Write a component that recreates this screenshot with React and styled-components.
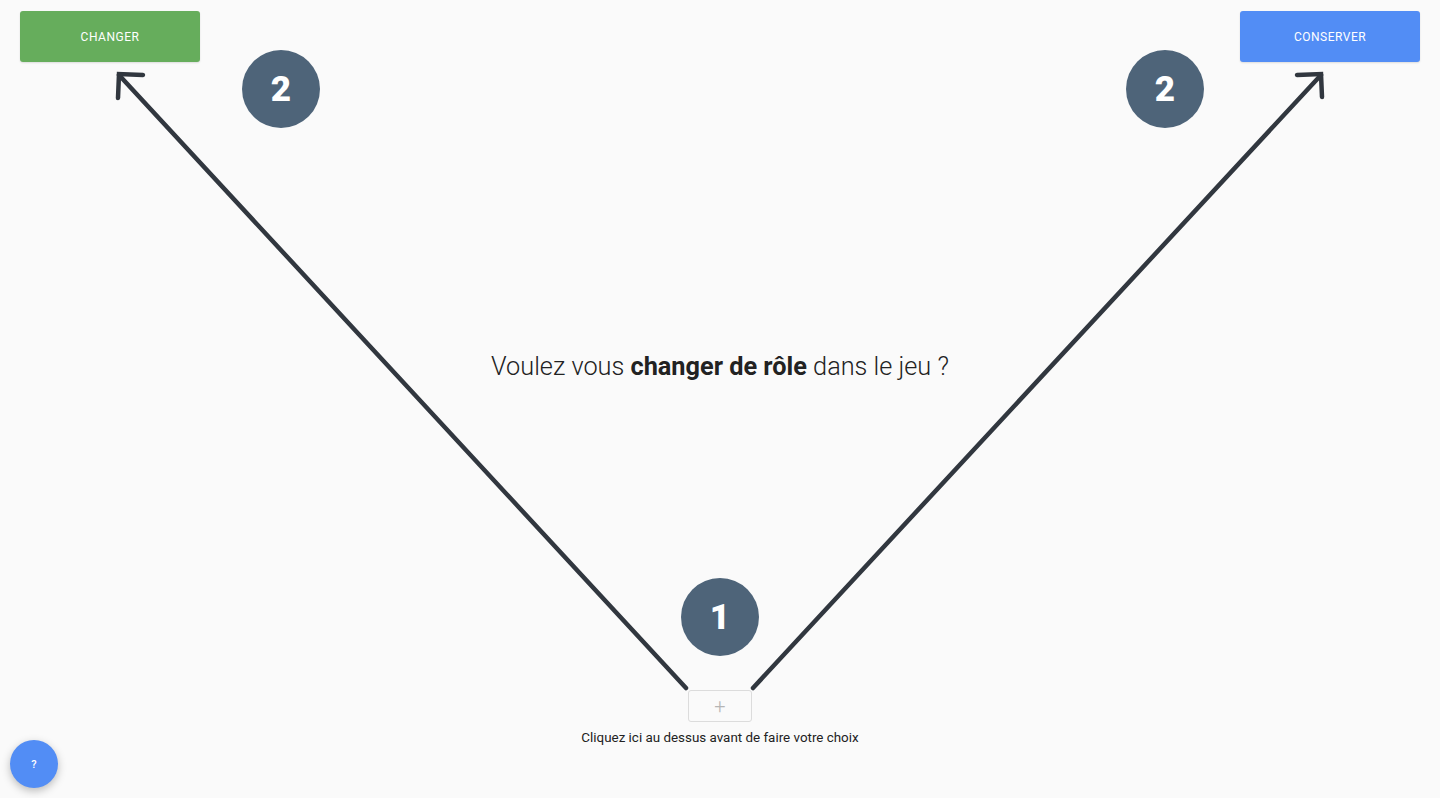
import React from "react";
import styled, { createGlobalStyle } from "styled-components";

const GlobalStyle = createGlobalStyle`
	html, body {
		margin: 0;
		padding: 0;
		background: #fafafa;
		font-family: Roboto, "Liberation Sans", Arial, sans-serif;
	}
`;

const App = () => {
	return (
		<Page>
			<GlobalStyle />
			<TopBar>
				<ChoiceButton color="#66ad5c">Changer</ChoiceButton>
				<ChoiceButton color="#528df5">Conserver</ChoiceButton>
			</TopBar>

			<Question>
				Voulez vous <b>changer de rôle</b> dans le jeu ?
			</Question>

			<Bottom>
				<PlusBox>+</PlusBox>
				<Caption>Cliquez ici au dessus avant de faire votre choix</Caption>
			</Bottom>

			<Arrows width="1440" height="798" viewBox="0 0 1440 798">
				<g stroke="#31373f" strokeWidth="4.5" strokeLinecap="round" fill="none">
					<line x1="686" y1="688" x2="119" y2="75" />
					<polyline points="143,75 119,74 118,98" />
					<line x1="753" y1="688" x2="1321" y2="75" />
					<polyline points="1297,75 1321,74 1322,97" />
				</g>
			</Arrows>

			<Step left={242} top={50}>2</Step>
			<Step left={1126} top={50}>2</Step>
			<Step left={681} top={578}>1</Step>

			<HelpButton>?</HelpButton>
		</Page>
	);
};

const Page = styled.div`
	position: relative;
	height: 100vh;
	display: flex;
	flex-direction: column;
	overflow: hidden;
`;

const TopBar = styled.div`
	display: flex;
	justify-content: space-between;
	padding: 11px 20px 0;
`;

const ChoiceButton = styled.button`
	width: 180px;
	height: 51px;
	border: none;
	border-radius: 3px;
	background: ${(p) => p.color};
	color: #fff;
	font-family: Roboto, "Liberation Sans", Arial, sans-serif;
	font-size: 12px;
	font-weight: 400;
	letter-spacing: 0.5px;
	text-transform: uppercase;
	padding-top: 2px;
	box-shadow: 0 1px 2px rgba(0, 0, 0, 0.12);
	cursor: pointer;
`;

const Question = styled.div`
	margin-top: 289px;
	text-align: center;
	font-size: 25.3px;
	font-weight: 300;
	line-height: 32px;
	color: #222;

	b {
		font-weight: 700;
	}
`;

const Bottom = styled.div`
	margin-top: 307px;
	display: flex;
	flex-direction: column;
	align-items: center;
	gap: 8px;
`;

const PlusBox = styled.div`
	width: 62px;
	height: 30px;
	border: 1px solid #dcdcdc;
	border-radius: 3px;
	display: flex;
	align-items: center;
	justify-content: center;
	color: #b5b5b5;
	font-size: 20px;
	font-weight: 300;
`;

const Caption = styled.div`
	font-size: 13.4px;
	color: #222;
	line-height: 16px;
`;

const Arrows = styled.svg`
	position: absolute;
	left: 0;
	top: 0;
	pointer-events: none;
`;

const Step = styled.div`
	position: absolute;
	left: ${(p) => p.left}px;
	top: ${(p) => p.top}px;
	width: 78px;
	height: 78px;
	border-radius: 50%;
	background: #4e6479;
	color: #fff;
	display: flex;
	align-items: center;
	justify-content: center;
	font-size: 35px;
	font-weight: 900;
`;

const HelpButton = styled.button`
	position: absolute;
	left: 10px;
	bottom: 10px;
	width: 48px;
	height: 48px;
	border: none;
	border-radius: 50%;
	background: #528df5;
	color: #fff;
	font-family: Roboto, "Liberation Sans", Arial, sans-serif;
	font-size: 11px;
	font-weight: 500;
	box-shadow: 0 3px 8px rgba(0, 0, 0, 0.25);
	cursor: pointer;
`;

export default App;
